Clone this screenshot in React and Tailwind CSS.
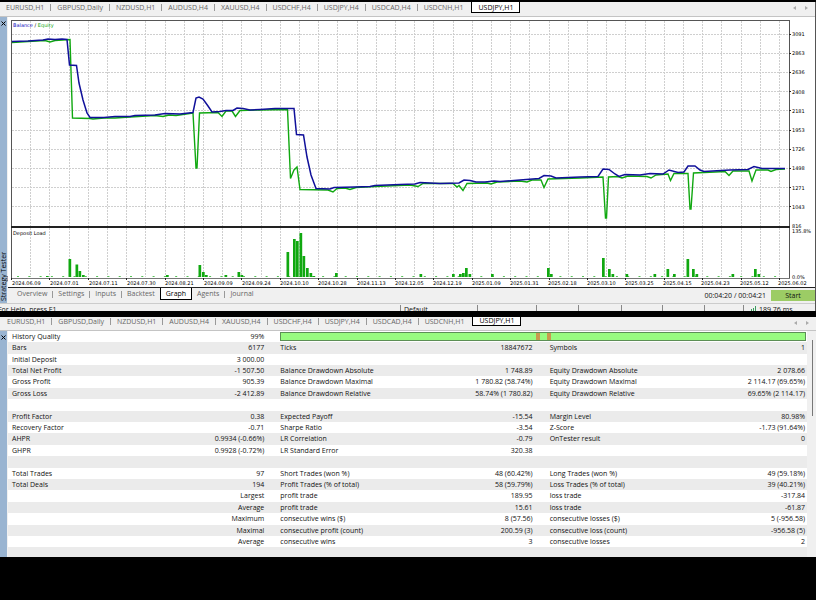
import React, { Fragment, useState } from "react";
import { clsx } from "clsx";

const SYMBOLS = [
  "EURUSD,H1",
  "GBPUSD,Daily",
  "NZDUSD,H1",
  "AUDUSD,H4",
  "XAUUSD,H4",
  "USDCHF,H4",
  "USDJPY,H4",
  "USDCAD,H4",
  "USDCNH,H1",
  "USDJPY,H1",
];

const TESTER_TABS = ["Overview", "Settings", "Inputs", "Backtest", "Graph", "Agents", "Journal"];

const Y_LABELS = [3091, 2863, 2636, 2408, 2181, 1953, 1726, 1498, 1271, 1043, 816];

const X_LABELS = [
  "2024.06.09", "2024.07.01", "2024.07.11", "2024.07.30", "2024.08.21", "2024.09.09", "2024.09.24",
  "2024.10.10", "2024.10.28", "2024.11.13", "2024.12.05", "2024.12.19", "2025.01.09", "2025.01.31",
  "2025.02.18", "2025.03.10", "2025.03.25", "2025.04.15", "2025.04.23", "2025.05.12", "2025.06.02",
];

const BALANCE =
  "12,41.5 28,41 43,40 48,39 55,39.5 62,39 67,39.5 69.5,65 76.5,65.5 79,83 83,100 87,113 90,117.5 104,117.5 115,116.5 130,116.5 135,115.5 155,115 165,113.5 180,114 193,112.5 196,98 199,97 203,99 208,106 212,112 220,111.5 226,110.5 233,110.5 237,108 243,108.5 250,110 260,109.5 275,108.5 294,108.5 296.5,134.5 303.5,135 307,157 311,175 316,188.5 330,189 334,187.5 355,187 370,186.5 375,185.5 400,184.5 415,184 420,182.5 440,183.5 459,183 464,180 470,180.5 476,182 485,182 494,181 500,181.5 520,180 539,178.5 544,175.5 551,176 556,178 580,177 598,176.5 603,169 609,169.5 615,174 619,176.5 625,174.5 640,175 650,173.5 663,174 669,170 678,172.5 684,172 688,166 695,166 700,170 704,171.5 730,170 748,169.5 754,166.5 762,168.5 785,168.5";

const EQUITY =
  "12,42.5 28,41.5 45,40.5 50,42 55,40.5 70,39.5 72.5,118 90,118.5 93,119 104,118 115,118 130,117 155,115.5 163,116.5 169,115 176,115.5 193,113 196,168 197,168 199.5,113 218,112.5 222,116.5 226,111 232,111 235.5,116.5 240,110.5 260,110 287.5,109.5 290.5,178.5 294,170 297,167 300,189.5 328,190 333,192 337,188.5 345,188 350,189.5 356,187.5 375,186.5 410,185 418,186.5 423,183.5 453,183.5 457,187 459,185.5 463,190.5 467,183.5 487,183 491,184 497,182 520,181 527,182 532,180 541,180 544,187.5 548,179 580,178 603,177 605.5,218 606.5,218 608.5,177 618,176.5 622,178 628,176 647,176.5 651,178 656,175 668,174 670.5,180.5 674,173.5 688,173.5 690,209 691,209 693.5,173 715,172 725,171.5 729,175.5 733,171 749,171 752,181 756,170 768,170 771,171.5 776,169.5 785,169";

// [left edge, height] of every deposit load bar
const LOAD_BARS = [
  [46, 1], [68.5, 18], [75.5, 12.5], [78.5, 6], [82, 2], [166, 2], [198.5, 12], [202, 5], [205, 2],
  [224.5, 2], [237.5, 5], [240.5, 2], [286.5, 25], [293, 38], [296, 36], [299.5, 44], [302.5, 21],
  [306, 9], [309.5, 4], [312.5, 1], [335, 4], [419.5, 3], [452, 3], [459, 3], [462, 4], [465, 9],
  [468.5, 3], [491, 3], [547, 9], [550, 3], [602, 19], [608, 8], [611.5, 3], [625.5, 3], [653.5, 3],
  [666.5, 8], [673, 3], [686.5, 18], [692, 8], [695.5, 3], [731.5, 3], [754, 8], [757.5, 3],
];

const REPORT = [
  ["Bars", "6177", "Ticks", "18847672", "Symbols", "1"],
  ["Initial Deposit", "3 000.00", "", "", "", ""],
  ["Total Net Profit", "-1 507.50", "Balance Drawdown Absolute", "1 748.89", "Equity Drawdown Absolute", "2 078.66"],
  ["Gross Profit", "905.39", "Balance Drawdown Maximal", "1 780.82 (58.74%)", "Equity Drawdown Maximal", "2 114.17 (69.65%)"],
  ["Gross Loss", "-2 412.89", "Balance Drawdown Relative", "58.74% (1 780.82)", "Equity Drawdown Relative", "69.65% (2 114.17)"],
  ["", "", "", "", "", ""],
  ["Profit Factor", "0.38", "Expected Payoff", "-15.54", "Margin Level", "80.98%"],
  ["Recovery Factor", "-0.71", "Sharpe Ratio", "-3.54", "Z-Score", "-1.73 (91.64%)"],
  ["AHPR", "0.9934 (-0.66%)", "LR Correlation", "-0.79", "OnTester result", "0"],
  ["GHPR", "0.9928 (-0.72%)", "LR Standard Error", "320.38", "", ""],
  ["", "", "", "", "", ""],
  ["Total Trades", "97", "Short Trades (won %)", "48 (60.42%)", "Long Trades (won %)", "49 (59.18%)"],
  ["Total Deals", "194", "Profit Trades (% of total)", "58 (59.79%)", "Loss Trades (% of total)", "39 (40.21%)"],
  ["", "Largest", "profit trade", "189.95", "loss trade", "-317.84"],
  ["", "Average", "profit trade", "15.61", "loss trade", "-61.87"],
  ["", "Maximum", "consecutive wins ($)", "8 (57.56)", "consecutive losses ($)", "5 (-956.58)"],
  ["", "Maximal", "consecutive profit (count)", "200.59 (3)", "consecutive loss (count)", "-956.58 (5)"],
  ["", "Average", "consecutive wins", "3", "consecutive losses", "2"],
  ["", "", "", "", "", ""],
];

const CELL_PADDING = ["pl-[4px]", "pr-[10px]", "pl-[6px]", "pr-[8px]", "pl-[9px]", "pr-[2px]"];

export default function App() {
  return (
    <div className="min-h-screen overflow-hidden bg-black pt-[2px] font-['Open_Sans',sans-serif] text-[7px] leading-[10px] text-[#111]">
      <section className="border-r border-[#555] bg-[#f0f0f0]">
        <SymbolTabs className="h-[15px] pb-[3px] leading-[12px]" />
        <div className="flex">
          <ToolboxHandle title="Strategy Tester" />
          <div className="min-w-0 flex-1">
            <Chart />
            <TesterBar />
          </div>
        </div>
        <StatusBar />
      </section>

      <section className="mt-[6px] bg-[#f0f0f0]">
        <SymbolTabs className="h-[14px] pb-[4px] pl-px leading-[8px]" />
        <div className="flex h-[226px] overflow-hidden">
          <ToolboxHandle />
          <div className="min-w-0 flex-1">
            <Report />
          </div>
          <div className="w-[9px] shrink-0 pt-[9px] pl-[5px]">
            <div className="h-[76px] w-px bg-[#777]"></div>
          </div>
        </div>
      </section>
    </div>
  );
}

function TabStrip({ tabs, active, onSelect, tabClassName }) {
  return tabs.map((tab, i) => (
    <Fragment key={tab}>
      {i > 0 && i !== active && i - 1 !== active && (
        <span className="h-[7px] w-px shrink-0 self-center bg-[#999]"></span>
      )}
      <button
        onClick={() => onSelect(i)}
        className={clsx(
          "shrink-0",
          tabClassName,
          i === active && "border border-t-0 border-black bg-white text-black"
        )}
      >
        {tab}
      </button>
    </Fragment>
  ));
}

function SymbolTabs({ className }) {
  const [active, setActive] = useState(SYMBOLS.length - 1);

  return (
    <nav className={clsx("flex border-b border-[#c4c4c4] text-[#666]", className)}>
      <TabStrip tabs={SYMBOLS} active={active} onSelect={setActive} tabClassName="px-[6px] last-of-type:ml-[2px]" />
      <div className="ml-auto flex items-start gap-[9px] pr-[7px] text-[#aaa]">
        <button aria-label="Scroll left">
          <Arrow d="M3 0 0 2 3 4z" />
        </button>
        <button aria-label="Scroll right">
          <Arrow d="M0 0 3 2 0 4z" />
        </button>
      </div>
    </nav>
  );
}

function Arrow({ d }) {
  return (
    <svg viewBox="0 0 3 4" className="mt-[4px] h-[4px] w-[3px] fill-current">
      <path d={d} />
    </svg>
  );
}

function ToolboxHandle({ title }) {
  return (
    <aside className="flex w-[8px] shrink-0 flex-col items-center justify-between border-r border-[#f0f0f0] bg-[#99b4d1] pt-[4px] text-black">
      <button aria-label="Close">
        <svg viewBox="0 0 5 5" className="h-[5px] w-[5px] stroke-current">
          <path d="M.5.5l4 4M4.500.5l-4 4" />
        </svg>
      </button>
      {title && <span className="rotate-180 pt-[2px] whitespace-nowrap [writing-mode:vertical-rl]">{title}</span>}
    </aside>
  );
}

function Chart() {
  return (
    <svg
      viewBox="8 17 807 271"
      className="block h-auto w-full bg-white font-['DejaVu_Sans',sans-serif] text-[5px]"
      role="img"
      aria-label="Balance and equity graph"
    >
      <g stroke="#cfcfcf" strokeDasharray="2 1" shapeRendering="crispEdges">
        {Array.from({ length: 40 }, (_, i) => {
          const x = Math.round(11 + (i + 1) * 19.2) + 0.5;
          return <line key={i} x1={x} x2={x} y1="21" y2="277" />;
        })}
        {Y_LABELS.slice(0, -1).map((v, i) => {
          const y = Math.round(33.5 + i * 19.2) + 0.5;
          return <line key={v} x1="12" x2="789" y1={y} y2={y} />;
        })}
      </g>

      <g fill="#10a810">
        {Array.from({ length: 68 }, (_, i) => (
          <rect key={i} x={17 + i * 11.3} y="276" width="2" height="1" opacity="0.7" />
        ))}
        {LOAD_BARS.map(([x, h]) => (
          <rect key={x} x={x} y={277 - h} width="2.7" height={h} />
        ))}
      </g>

      <polyline points={EQUITY} fill="none" stroke="#10a810" strokeWidth="1.4" />
      <polyline points={BALANCE} fill="none" stroke="#10109a" strokeWidth="1.5" />

      <g stroke="#222" shapeRendering="crispEdges">
        <path d="M11.500 278.500V20.500H789.500V278.500" fill="none" stroke="#555" />
        <path d="M11 278.500H790" stroke="#777" />
        <path d="M11 227H790" strokeWidth="2" />
        <path d="M8 287.500H815" />
        {Y_LABELS.slice(0, -1).map((v, i) => {
          const y = Math.round(33.5 + i * 19.2) + 0.5;
          return <path key={v} d={`M789 ${y}h2`} />;
        })}
        {X_LABELS.map((v, i) => {
          const x = Math.round(11 + i * 38.4) + 0.5;
          return <path key={v} d={`M${x} 278v2`} />;
        })}
      </g>

      <text x="13" y="27">
        <tspan fill="#1010c0">Balance</tspan> / <tspan fill="#10a810">Equity</tspan>
      </text>
      <text x="13" y="235">Deposit Load</text>
      {Y_LABELS.map((v, i) => (
        <text key={v} x="792" y={Math.round(36 + i * 19.2)}>{v}</text>
      ))}
      <text x="792" y="233">135.8%</text>
      <text x="792" y="279">0.0%</text>
      {X_LABELS.map((v, i) => (
        <text key={v} x={Math.round(12 + i * 38.3)} y="285">{v}</text>
      ))}
    </svg>
  );
}

function TesterBar() {
  const [active, setActive] = useState(4);

  return (
    <div className="flex h-[15px] pb-[3px] pl-[4px] leading-[12px] text-[#666]">
      <TabStrip tabs={TESTER_TABS} active={active} onSelect={setActive} tabClassName="px-[5px]" />
      <span className="mt-[2px] ml-auto text-[#111]">00:04:20 / 00:04:21</span>
      <button className="mt-[2px] -mb-px ml-[5px] w-[44px] bg-[#9ccc65] leading-[11px] text-[#111]">Start</button>
    </div>
  );
}

function StatusBar() {
  return (
    <footer className="flex h-[8px] items-start overflow-hidden border-t border-[#ccc] pt-px">
      <span className="-ml-[2px] flex-1">For Help, press F1</span>
      <span className="w-[77px] border-l border-[#888] pl-[3px]">Default</span>
      <span className="h-[10px] w-[59px] border-l border-[#888]"></span>
      <span className="h-[10px] w-[42px] border-l border-[#888]"></span>
      <span className="h-[10px] w-[43px] border-l border-[#888]"></span>
      <span className="h-[10px] w-[41px] border-l border-[#888]"></span>
      <span className="h-[10px] w-[42px] border-l border-[#888]"></span>
      <span className="h-[10px] w-[39px] border-l border-[#888]"></span>
      <span className="flex w-[72px] gap-[3px] border-l border-[#888] pl-[5px]">
        <svg viewBox="0 0 7 8" className="mt-px h-[8px] w-[7px] fill-[#3a9d5d]">
          <path d="M0 5h1v3H0zM2 3h1v5H2zM4 2h1v6H4zM6 0h1v8H6z" />
        </svg>
        189.76 ms
      </span>
    </footer>
  );
}

function Report() {
  return (
    <table className="w-full table-fixed border-collapse bg-white">
      <tbody>
        <tr className="h-[11px]">
          <th scope="row" className="p-0 pl-[4px] text-left font-normal">History Quality</th>
          <td className="p-0 pr-[10px] text-right">99%</td>
          <td colSpan={4} className="p-0 pr-px pl-[6px]">
            <div className="flex h-[9px] border border-[#5c8f55] bg-[#98fb80]">
              <div className="w-[48%]"></div>
              <div className="ml-[3px] w-[4px] bg-[#c89a4e]"></div>
              <div className="ml-[7px] w-[4px] bg-[#c89a4e]"></div>
            </div>
          </td>
        </tr>
        {REPORT.map((row, i) => (
          <tr key={i} className={clsx(i % 2 === 0 && "bg-[#ebebeb]", i % 5 === 0 || i % 5 === 3 ? "h-[12px]" : "h-[11px]")}>
            {row.map((text, j) =>
              j % 2 === 0 ? (
                <th key={j} scope="row" className={clsx("p-0 text-left font-normal whitespace-nowrap", CELL_PADDING[j])}>
                  {text}
                </th>
              ) : (
                <td key={j} className={clsx("p-0 text-right whitespace-nowrap", CELL_PADDING[j])}>
                  {text}
                </td>
              )
            )}
          </tr>
        ))}
      </tbody>
    </table>
  );
}
